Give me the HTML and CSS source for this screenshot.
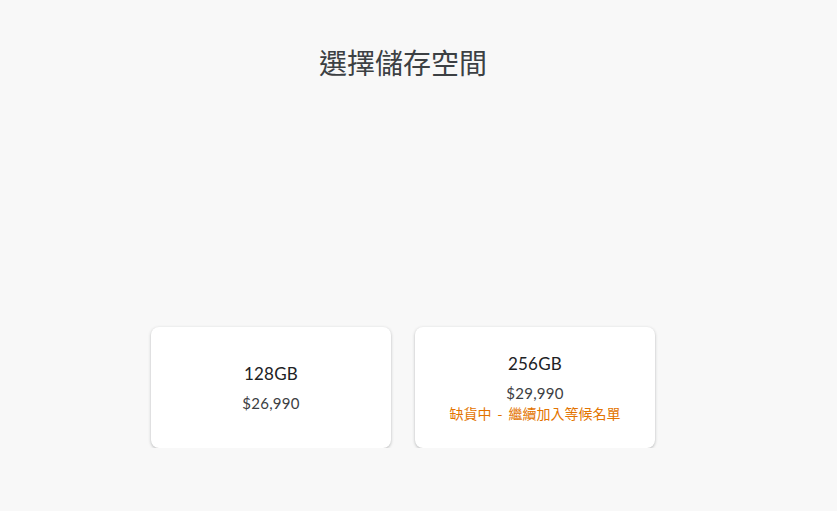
FILE: index.html
```html
<!DOCTYPE html>
<html lang="zh-Hant">
<head>
  <meta charset="UTF-8" />
  <title>選擇儲存空間</title>
  <meta name="viewport" content="width=device-width, initial-scale=1.0">
  <link rel="stylesheet" href="styles.css">
</head>
<body>
  <div class="page">
    <h1 class="title">選擇儲存空間</h1>

    <div class="options">
      <div class="option">
        <div class="size">128GB</div>
        <div class="price">$26,990</div>
      </div>

      <div class="option">
        <div class="size">256GB</div>
        <div class="price">$29,990</div>
        <div class="stock">缺貨中 - 繼續加入等候名單</div>
      </div>
    </div>
  </div>
</body>
</html>
```

FILE: styles.css
```css
body {
  margin: 0;
  padding-right: 31px;
  background: #f8f8f8;
  font-family: Lato, "Noto Sans CJK TC", sans-serif;
  color: #3c4043;
}

.page {
  width: 504px;
  margin: 0 auto;
}

.title {
  margin: 0;
  padding-top: 42px;
  text-align: center;
  font-family: "Noto Sans CJK TC", sans-serif;
  font-size: 28px;
  font-weight: 400;
  line-height: 40px;
  color: #3c4043;
}

.options {
  display: grid;
  grid-template-columns: 240px 240px;
  gap: 24px;
  margin-top: 245px;
}

.option {
  height: 121px;
  background: #fff;
  border-radius: 8px;
  box-shadow: 0 1px 3px rgba(60, 64, 67, 0.35);
  display: flex;
  flex-direction: column;
  align-items: center;
  justify-content: center;
}

.size {
  font-size: 17px;
  line-height: 24px;
  letter-spacing: 0.2px;
  color: #202124;
  margin-bottom: 7px;
}

.price {
  font-size: 15px;
  line-height: 20px;
  letter-spacing: 0.3px;
  color: #3c4043;
}

.stock {
  font-family: "Noto Sans CJK TC", sans-serif;
  font-size: 14px;
  line-height: 20px;
  word-spacing: 3px;
  color: #e37400;
}
```
